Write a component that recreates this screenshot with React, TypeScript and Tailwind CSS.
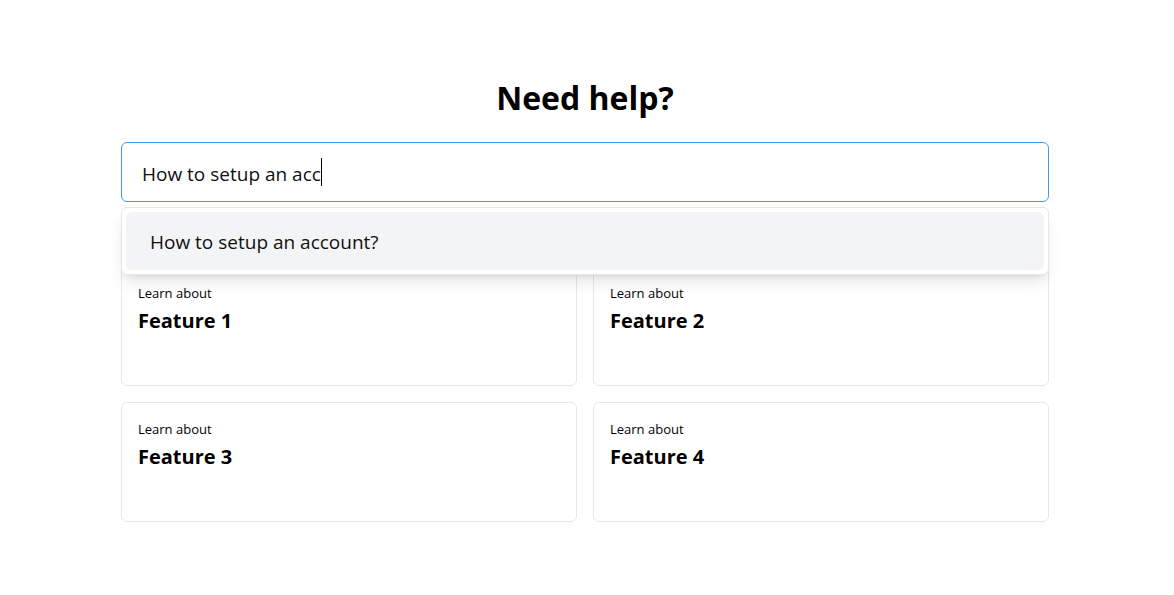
import { useState } from 'react';

const features = ['Feature 1', 'Feature 2', 'Feature 3', 'Feature 4'];

export default function App() {
  const [query, setQuery] = useState('How to setup an acc');
  const suggestions = ['How to setup an account?'].filter((s) =>
    s.toLowerCase().startsWith(query.toLowerCase())
  );

  return (
    <div
      className="min-h-screen bg-white pr-1 text-black"
      style={{ fontFamily: '"Open Sans", "Noto Sans", sans-serif' }}
    >
      <div className="mx-auto w-[928px] pt-[78px]">
        <h1 className="mb-6 text-center text-[32px] leading-10 font-bold">Need help?</h1>

        <div className="relative">
          <input
            autoFocus
            value={query}
            onChange={(e) => setQuery(e.target.value)}
            className="h-[60px] w-full rounded-md border border-[#3d9be9] px-5 pt-[3px] text-[19px] text-[#111] caret-black outline-none"
          />
          {/* static caret so the focused state shows in the screenshot */}
          <div className="pointer-events-none absolute left-[21px] top-[16px] flex items-center text-[19px]">
            <span className="invisible whitespace-pre">{query}</span>
            <span className="h-[28px] w-px bg-black" />
          </div>
          {suggestions.length > 0 && (
            <div className="absolute left-0 right-0 top-[65px] z-10 rounded-md border border-gray-200 bg-white p-1 shadow-lg">
              {suggestions.map((s) => (
                <div
                  key={s}
                  className="rounded-md bg-gray-100 px-6 pt-[16px] pb-[14px] text-[19px] leading-7 text-[#111]"
                >
                  {s}
                </div>
              ))}
            </div>
          )}
        </div>

        <div className="mt-16 grid grid-cols-2 gap-4">
          {features.map((f) => (
            <div key={f} className="h-[120px] rounded-md border border-gray-200 p-4">
              <div className="text-[13px] leading-5">Learn about</div>
              <div className="mt-1 text-xl font-bold">{f}</div>
            </div>
          ))}
        </div>
      </div>
    </div>
  );
}
